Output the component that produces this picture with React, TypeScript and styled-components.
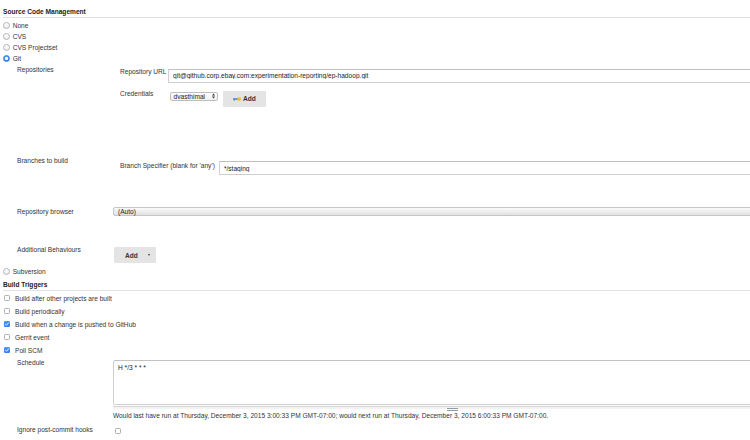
import React from 'react';
import styled, { createGlobalStyle } from 'styled-components';

const GlobalStyles = createGlobalStyle`
  html, body {
    margin: 0;
    padding: 0;
    overflow: hidden;
    background: #fff;
  }
  body {
    font-family: "Liberation Sans", Arial, Helvetica, sans-serif;
    font-size: 6.6px;
    color: #333;
  }
`;

const scmOptions = [
  { label: 'None', checked: false },
  { label: 'CVS', checked: false },
  { label: 'CVS Projectset', checked: false },
  { label: 'Git', checked: true },
];

const triggers = [
  { label: 'Build after other projects are built', checked: false },
  { label: 'Build periodically', checked: false },
  { label: 'Build when a change is pushed to GitHub', checked: true },
  { label: 'Gerrit event', checked: false },
  { label: 'Poll SCM', checked: true },
];

const KeyIcon = () => (
  <svg width="8" height="4" viewBox="0 0 8 4">
    <rect x="0" y="1.3" width="5" height="1.4" fill="#3f78c8" />
    <rect x="1" y="2.5" width="1" height="1.2" fill="#3f78c8" />
    <rect x="4.4" y="0.2" width="3.4" height="3.6" rx="1" fill="#e8c22c" />
  </svg>
);

const CheckMark = () => (
  <svg width="6" height="6" viewBox="0 0 6 6">
    <path d="M1.3 3.1 L2.5 4.3 L4.8 1.6" fill="none" stroke="#fff" strokeWidth="0.9" />
  </svg>
);

const UpDown = () => (
  <svg width="3" height="6" viewBox="0 0 3 6">
    <path d="M0 2.4 L1.5 0.4 L3 2.4 Z M0 3.6 L1.5 5.6 L3 3.6 Z" fill="#333" />
  </svg>
);

const App = () => (
  <React.Fragment>
    <GlobalStyles />
    <Page>
      <SectionTitle $gap={0} $pad={8}>Source Code Management</SectionTitle>
      <OptionList $gap={1.5}>
        {scmOptions.map((o) => (
          <OptionRow key={o.label}>
            <Radio $checked={o.checked} />
            {o.label}
          </OptionRow>
        ))}
      </OptionList>

      <ConfigBlock>
        <ConfigRow $gap={0}>
          <ConfigLabel $pad={2}>Repositories</ConfigLabel>
          <RepoTable>
            <FieldLabel $shift={-1}>Repository URL</FieldLabel>
            <TextField readOnly value="git@github.corp.ebay.com:experimentation-reporting/ep-hadoop.git" />
            <FieldLabel $shift={-1}>Credentials</FieldLabel>
            <CredentialsCell>
              <MacSelect>
                dvasthimal
                <UpDown />
              </MacSelect>
              <GreyButton $width={43} $height={16}>
                <KeyIcon />
                Add
              </GreyButton>
            </CredentialsCell>
          </RepoTable>
        </ConfigRow>

        <ConfigRow $gap={49.5}>
          <ConfigLabel $pad={1}>Branches to build</ConfigLabel>
          <BranchTable>
            <FieldLabel $shift={1}>Branch Specifier (blank for 'any')</FieldLabel>
            <TextField readOnly value="*/staging" />
          </BranchTable>
        </ConfigRow>

        <ConfigRow $gap={32}>
          <ConfigLabel $pad={1}>Repository browser</ConfigLabel>
          <WideSelect>(Auto)</WideSelect>
        </ConfigRow>

        <ConfigRow $gap={29}>
          <ConfigLabel $pad={1}>Additional Behaviours</ConfigLabel>
          <MenuButton>
            Add
            <Caret />
          </MenuButton>
        </ConfigRow>
      </ConfigBlock>

      <OptionList $gap={2.9}>
        <OptionRow>
          <Radio $checked={false} />
          Subversion
        </OptionRow>
      </OptionList>

      <SectionTitle $gap={3.4} $pad={0}>Build Triggers</SectionTitle>
      <CheckList>
        {triggers.map((t) => (
          <CheckRow key={t.label}>
            <CheckBox $checked={t.checked}>{t.checked && <CheckMark />}</CheckBox>
            {t.label}
          </CheckRow>
        ))}
      </CheckList>

      <ConfigBlock>
        <ConfigRow $gap={2.5}>
          <ConfigLabel $pad={0}>Schedule</ConfigLabel>
          <ScheduleCell>
            <ScheduleArea readOnly value="H */3 * * *" />
            <ResizeBar>
              <Grip />
            </ResizeBar>
            <Hint>
              Would last have run at Thursday, December 3, 2015 3:00:33 PM GMT-07:00; would next run at
              Thursday, December 3, 2015 6:00:33 PM GMT-07:00.
            </Hint>
          </ScheduleCell>
        </ConfigRow>

        <ConfigRow $gap={6}>
          <ConfigLabel $pad={0}>Ignore post-commit hooks</ConfigLabel>
          <IgnoreCell>
            <CheckBox $checked={false} />
          </IgnoreCell>
        </ConfigRow>
      </ConfigBlock>
    </Page>
  </React.Fragment>
);

export default App;

const Page = styled('main')`
  width: 764px;
  display: flex;
  flex-direction: column;
`;

const SectionTitle = styled('h2')<{ $gap: number; $pad: number }>`
  margin: ${(p) => p.$gap}px 0 0 3px;
  padding: ${(p) => p.$pad}px 0 1px 0;
  font-size: 6.6px;
  line-height: 8px;
  font-weight: bold;
  color: #222;
  border-bottom: 1px solid #e3e3e3;
`;

const OptionList = styled('div')<{ $gap: number }>`
  display: flex;
  flex-direction: column;
  margin-top: ${(p) => p.$gap}px;
`;

const OptionRow = styled('label')`
  display: flex;
  align-items: center;
  gap: 2.7px;
  height: 11.1px;
  padding-left: 3px;
`;

const Radio = styled('span')<{ $checked: boolean }>`
  position: relative;
  box-sizing: border-box;
  width: 7px;
  height: 7px;
  border-radius: 50%;
  border: 0.8px solid ${(p) => (p.$checked ? '#3a7fd8' : '#b3b3b3')};
  background: ${(p) =>
    p.$checked ? 'linear-gradient(#5aa2f6, #2f7ee6)' : 'linear-gradient(#ffffff, #ededed)'};

  &::after {
    content: '';
    display: ${(p) => (p.$checked ? 'block' : 'none')};
    position: absolute;
    left: 50%;
    top: 50%;
    width: 2.4px;
    height: 2.4px;
    margin: -1.2px 0 0 -1.2px;
    border-radius: 50%;
    background: #fff;
  }
`;

const ConfigBlock = styled('div')`
  display: flex;
  flex-direction: column;
  padding-left: 17px;
`;

const ConfigRow = styled('div')<{ $gap: number }>`
  display: flex;
  align-items: flex-start;
  margin-top: ${(p) => p.$gap}px;
`;

const ConfigLabel = styled('div')<{ $pad: number }>`
  width: 96px;
  flex-shrink: 0;
  line-height: 8px;
  padding-top: ${(p) => p.$pad}px;
`;

const RepoTable = styled('div')`
  flex: 1;
  display: grid;
  grid-template-columns: 48px 1fr;
  row-gap: 8px;
  align-items: start;
  margin-top: 5px;
  padding-left: 7px;
`;

const BranchTable = styled('div')`
  flex: 1;
  display: flex;
  align-items: flex-start;
  gap: 4px;
  margin-top: 5px;
  padding-left: 7px;
`;

const FieldLabel = styled('div')<{ $shift: number }>`
  line-height: 8px;
  margin-top: ${(p) => p.$shift}px;
  white-space: nowrap;
`;

const TextField = styled('input')`
  flex: 1;
  box-sizing: border-box;
  height: 14px;
  margin: 0;
  padding: 0 4px;
  border: 1px solid #cfcfcf;
  border-top-color: #c0c0c0;
  font: inherit;
  font-size: 6.6px;
  color: #222;
  background: #fff;
  outline: none;
`;

const CredentialsCell = styled('div')`
  display: flex;
  align-items: flex-start;
  gap: 5px;
  padding-left: 2px;
`;

const MacSelect = styled('div')`
  box-sizing: border-box;
  display: flex;
  align-items: center;
  justify-content: space-between;
  width: 48px;
  height: 9px;
  margin-top: 1px;
  padding: 0 2.5px 0 2.5px;
  border: 0.8px solid #bdbdbd;
  border-radius: 2px;
  background: linear-gradient(#ffffff, #f1f1f1);
  color: #222;
`;

const GreyButton = styled('div')<{ $width: number; $height: number }>`
  display: flex;
  align-items: center;
  justify-content: center;
  gap: 2px;
  width: ${(p) => p.$width}px;
  height: ${(p) => p.$height}px;
  background: #e4e4e4;
  border-radius: 1px;
  color: #333;
  font-weight: bold;
`;

const WideSelect = styled('div')`
  flex: 1;
  box-sizing: border-box;
  height: 9px;
  margin-top: 0;
  padding-left: 4px;
  line-height: 7.5px;
  border: 0.8px solid #c6c6c6;
  border-radius: 2px;
  background: linear-gradient(#fbfbfb, #e1e1e1);
  color: #222;
`;

const MenuButton = styled('div')`
  display: flex;
  align-items: center;
  justify-content: space-between;
  box-sizing: border-box;
  width: 42px;
  height: 16px;
  margin: 2px 0 0 1px;
  padding: 0 6px 0 11px;
  background: #e4e4e4;
  border-radius: 1px;
  color: #333;
  font-weight: bold;
`;

const Caret = styled('span')`
  width: 0;
  height: 0;
  border-left: 1.6px solid transparent;
  border-right: 1.6px solid transparent;
  border-top: 2px solid #333;
`;

const CheckList = styled('div')`
  display: flex;
  flex-direction: column;
  margin-top: 1px;
`;

const CheckRow = styled('label')`
  display: flex;
  align-items: center;
  gap: 5px;
  height: 13px;
  padding-left: 4px;
`;

const CheckBox = styled('span')<{ $checked: boolean }>`
  box-sizing: border-box;
  display: flex;
  width: 6px;
  height: 6px;
  border-radius: 1.3px;
  border: ${(p) => (p.$checked ? 'none' : '0.8px solid #b0b0b0')};
  background: ${(p) => (p.$checked ? 'linear-gradient(#4f9af4, #2f7fe8)' : '#fff')};
`;

const ScheduleCell = styled('div')`
  flex: 1;
  display: flex;
  flex-direction: column;
  margin-top: 1px;
`;

const ScheduleArea = styled('textarea')`
  box-sizing: border-box;
  height: 45px;
  margin: 0;
  padding: 3px 4px;
  border: 1px solid #cfcfcf;
  border-top-color: #c2c2c2;
  border-radius: 2px;
  font: inherit;
  font-size: 6.6px;
  line-height: 8px;
  color: #222;
  resize: none;
  outline: none;
`;

const ResizeBar = styled('div')`
  display: flex;
  height: 2px;
  margin-top: 1px;
  border-top: 1px solid #d4d4d4;
  background: #f3f3f3;
`;

const Grip = styled('span')`
  width: 11px;
  height: 1px;
  margin: 0.5px 0 0 334px;
  border-top: 0.6px solid #9a9a9a;
  border-bottom: 0.6px solid #9a9a9a;
`;

const Hint = styled('div')`
  margin-top: 3px;
  line-height: 8px;
  white-space: nowrap;
`;

const IgnoreCell = styled('div')`
  padding: 2px 0 0 2px;
`;
